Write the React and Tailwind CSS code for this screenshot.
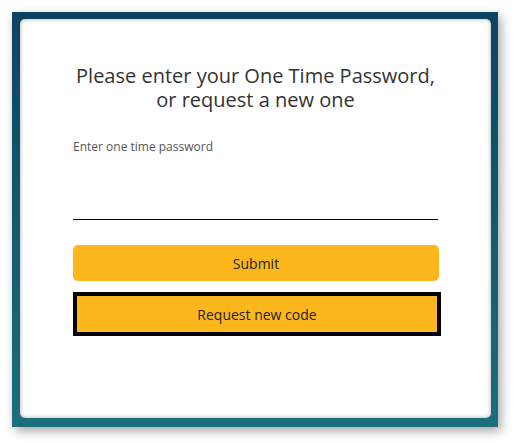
import React from 'react';

function App() {
  return (
    <div className="w-[516px] h-[443px] bg-white pt-[12px] pl-[12px]" style={{ fontFamily: '"Open Sans", sans-serif' }}>
      <div className="w-[486px] h-[415px] bg-gradient-to-b from-[#0c4460] to-[#1b6f7c] pt-[7px] pl-[8px] pr-[7px] pb-[9px] shadow-[3px_4px_10px_rgba(0,0,0,0.35)]">
        <div className="w-full h-full bg-white rounded-[5px] shadow-[inset_0_0_4px_rgba(0,0,0,0.35)] px-[53px] pt-[45px] flex flex-col">
          <h1 className="text-center text-[20px] leading-[24px] text-[#333]">
            Please enter your One Time Password,<br />or request a new one
          </h1>
          <label className="mt-[27px] text-[12px] leading-[16px] text-[#555]">Enter one time password</label>
          <input className="mt-[35px] h-[30px] border-b border-black outline-none" type="password" />
          <button className="mt-[25px] h-[36px] w-[366px] rounded-[5px] bg-[#fdb71c] text-[14px] text-[#222]">Submit</button>
          <button className="mt-[11px] h-[44px] w-[368px] border-[4px] border-black bg-[#fdb71c] text-[14px] text-[#222]">Request new code</button>
        </div>
      </div>
    </div>
  );
}

export default App;
